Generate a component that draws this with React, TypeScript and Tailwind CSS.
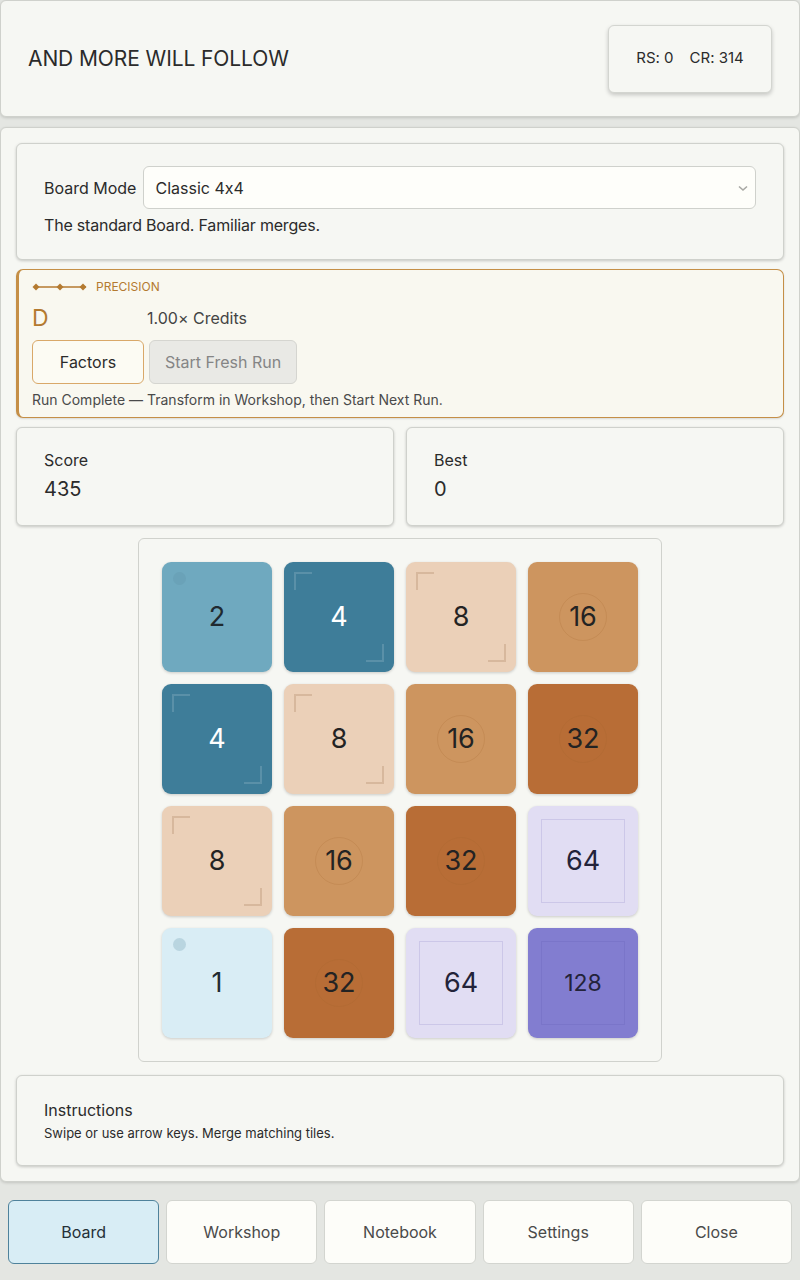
import { useState } from "react";

type Tile = { value: number };

const board: Tile[][] = [
  [{ value: 2 }, { value: 4 }, { value: 8 }, { value: 16 }],
  [{ value: 4 }, { value: 8 }, { value: 16 }, { value: 32 }],
  [{ value: 8 }, { value: 16 }, { value: 32 }, { value: 64 }],
  [{ value: 1 }, { value: 32 }, { value: 64 }, { value: 128 }],
];

const tileStyles: Record<number, string> = {
  1: "bg-[#d9edf5] text-[#1f2a30]",
  2: "bg-[#6fa9bf] text-[#1f2a30]",
  4: "bg-[#3e7d99] text-white",
  8: "bg-[#ebd0b8] text-[#232323]",
  16: "bg-[#cd955f] text-[#232323]",
  32: "bg-[#b86d36] text-[#232323]",
  64: "bg-[#e1ddf3] text-[#23233a]",
  128: "bg-[#827dd0] text-[#23233a]",
};

// little ornaments each tier gets on top of its colour
function TileMark({ value }: { value: number }) {
  if (value === 1 || value === 2) {
    return <span className="absolute left-[11px] top-[10px] h-[13px] w-[13px] rounded-full bg-[#5b8fa3]/25" />;
  }
  if (value === 4 || value === 8) {
    const line = value === 4 ? "border-white/15" : "border-[#c9a98a]/60";
    return (
      <>
        <span className={`absolute left-[10px] top-[10px] h-[18px] w-[18px] border-l-2 border-t-2 ${line}`} />
        <span className={`absolute bottom-[10px] right-[10px] h-[18px] w-[18px] border-b-2 border-r-2 ${line}`} />
      </>
    );
  }
  if (value === 16 || value === 32) {
    return (
      <span className="absolute left-1/2 top-1/2 h-[48px] w-[48px] -translate-x-1/2 -translate-y-1/2 rounded-full border border-[#a0652f]/20" />
    );
  }
  return (
    <span
      className={`absolute inset-[13px] border ${value === 64 ? "border-[#b8b2de]/50" : "border-[#7570c4]/60"}`}
    />
  );
}

function TileCell({ value }: Tile) {
  return (
    <div
      className={`relative flex h-[110px] w-[110px] items-center justify-center rounded-[9px] shadow-[0_1px_3px_rgba(0,0,0,0.18)] ${tileStyles[value]}`}
    >
      <TileMark value={value} />
      <span className={`relative ${value >= 100 ? "text-[23px]" : "text-[27px]"}`}>{value}</span>
    </div>
  );
}

function PrecisionGlyph() {
  return (
    <svg width="56" height="10" viewBox="0 0 56 10" className="text-[#b47a30]">
      <line x1="2" y1="5" x2="54" y2="5" stroke="currentColor" strokeWidth="1.4" />
      {[4, 28, 51].map((x) => (
        <path key={x} d={`M${x} 1.5 L${x + 3.5} 5 L${x} 8.5 L${x - 3.5} 5 Z`} fill="currentColor" />
      ))}
    </svg>
  );
}

const card =
  "rounded-[6px] border border-[#cfd1cc] bg-[#f6f7f3] shadow-[0_1px_3px_rgba(0,0,0,0.2)]";

export default function App() {
  const [tab, setTab] = useState("Board");
  const tabs = ["Board", "Workshop", "Notebook", "Settings", "Close"];

  return (
    <div
      className="flex min-h-[1280px] w-[800px] flex-col bg-[#e4e6e2] text-[#2b2b2b] [font-feature-settings:'calt'_0]"
      style={{ fontFamily: "Inter, 'Noto Sans', sans-serif" }}
    >
      {/* header */}
      <header className="flex h-[117px] items-center justify-between rounded-[6px] border border-[#cfd1cc] bg-[#f6f7f3] pl-[27px] pr-[27px] shadow-[0_1px_3px_rgba(0,0,0,0.15)]">
        <h1 className="text-[21px] font-normal tracking-[-0.1px]">AND MORE WILL FOLLOW</h1>
        <div className="flex h-[68px] w-[164px] items-center justify-center gap-[16px] rounded-[6px] border border-[#d3d5d0] bg-[#f6f7f3] text-[15px] shadow-[0_2px_4px_rgba(0,0,0,0.2)]">
          <span>RS: 0</span>
          <span>CR: 314</span>
        </div>
      </header>

      {/* main panel */}
      <main className="mt-[10px] flex flex-col gap-[9px] rounded-[6px] border border-[#cfd1cc] bg-[#f6f7f3] px-[15px] pb-[15px] pt-[15px] shadow-[0_1px_3px_rgba(0,0,0,0.15)]">
        <section className={`${card} h-[117px] px-[27px] pt-[22px]`}>
          <div className="flex items-center gap-[7px]">
            <span className="text-[16px]">Board Mode</span>
            <div className="flex h-[43px] flex-1 items-center justify-between rounded-[6px] border border-[#cfd1cc] bg-[#fefefa] pl-[11px] pr-[6px]">
              <span className="text-[16px]">Classic 4x4</span>
              <svg width="12" height="12" viewBox="0 0 12 12">
                <path d="M2 4.5 L6 8 L10 4.5" fill="none" stroke="#a8a8a4" strokeWidth="1.6" />
              </svg>
            </div>
          </div>
          <p className="mt-[4px] text-[16px] tracking-[-0.2px]">The standard Board. Familiar merges.</p>
        </section>

        <section className="h-[149px] rounded-[7px] border border-l-[3px] border-[#c58f47] bg-[#f9f8f0] pl-[13px] pt-[8px] shadow-[0_1px_2px_rgba(0,0,0,0.12)]">
          <div className="flex items-center gap-[8px]">
            <PrecisionGlyph />
            <span className="text-[12px] text-[#b47a30]">PRECISION</span>
          </div>
          <div className="mt-[7px] flex items-center">
            <span className="w-[115px] text-[23px] leading-[30px] text-[#b47a30]">D</span>
            <span className="text-[16px] text-[#444]">1.00× Credits</span>
          </div>
          <div className="mt-[7px] flex gap-[5px]">
            <button className="h-[44px] w-[112px] rounded-[6px] border border-[#d9a869] bg-[#fcfbf3] text-[16px] text-[#2b2b2b]">
              Factors
            </button>
            <button className="h-[44px] w-[148px] rounded-[6px] border border-[#d5d5d0] bg-[#e9e9e5] text-[16px] text-[#858585]">
              Start Fresh Run
            </button>
          </div>
          <p className="mt-[5px] text-[14px] text-[#4a4a4a]">
            Run Complete — Transform in Workshop, then Start Next Run.
          </p>
        </section>

        <div className="grid grid-cols-2 gap-[12px]">
          {[
            ["Score", "435"],
            ["Best", "0"],
          ].map(([label, value]) => (
            <section key={label} className={`${card} h-[99px] px-[27px] pt-[20px]`}>
              <div className="text-[16px]">{label}</div>
              <div className="mt-[2px] text-[20px]">{value}</div>
            </section>
          ))}
        </div>

        <div className="mt-[3px] flex justify-center">
          <div className="grid grid-cols-4 gap-x-[12px] gap-y-[12px] rounded-[6px] border border-[#d0d2cd] bg-[#f6f7f3] p-[23px]">
            {board.flat().map((t, i) => (
              <TileCell key={i} value={t.value} />
            ))}
          </div>
        </div>

        <section className={`${card} mt-[4px] h-[91px] px-[27px] pt-[22px]`}>
          <div className="text-[16px]">Instructions</div>
          <p className="mt-[2px] text-[13px]">Swipe or use arrow keys. Merge matching tiles.</p>
        </section>
      </main>

      {/* bottom tabs */}
      <nav className="mt-[18px] grid grid-cols-5 gap-[7px] px-[8px]">
        {tabs.map((t) => (
          <button
            key={t}
            onClick={() => setTab(t)}
            className={`h-[64px] rounded-[6px] border text-[16px] ${
              tab === t
                ? "border-[#4f829b] bg-[#d8edf5] text-[#243038]"
                : "border-[#d3d5d0] bg-[#fdfdf9] text-[#4a4a4a]"
            }`}
          >
            {t}
          </button>
        ))}
      </nav>
    </div>
  );
}
